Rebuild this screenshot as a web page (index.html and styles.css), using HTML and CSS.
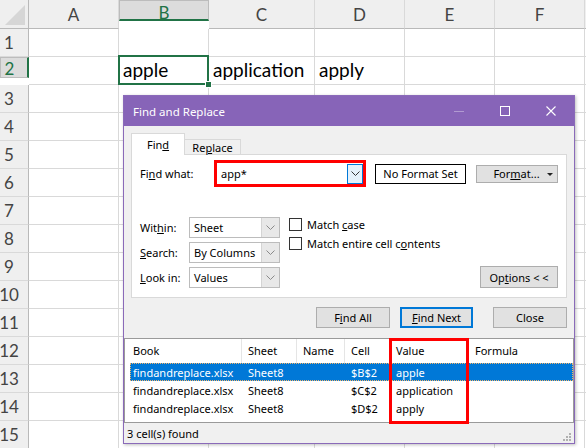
FILE: index.html
```html
<!DOCTYPE html>
<html>
<head>
<meta charset="utf-8">
<link rel="stylesheet" href="styles.css">
</head>
<body>
<div class="sheet">
  <div class="corner"><span class="tri"></span></div>
  <div class="colh">A</div><div class="colh sel">B</div><div class="colh">C</div><div class="colh">D</div><div class="colh">E</div><div class="colh">F</div><div class="colh"></div>

  <div class="rowh">1</div><div class="cell"></div><div class="cell"></div><div class="cell"></div><div class="cell"></div><div class="cell"></div><div class="cell"></div><div class="cell"></div>
  <div class="rowh sel">2</div><div class="cell"></div><div class="cell active"><span>apple</span><span class="cursor"></span><span class="handle"></span></div><div class="cell">application</div><div class="cell">apply</div><div class="cell"></div><div class="cell"></div><div class="cell"></div>
  <div class="rowh">3</div><div class="cell"></div><div class="cell"></div><div class="cell"></div><div class="cell"></div><div class="cell"></div><div class="cell"></div><div class="cell"></div>
  <div class="rowh">4</div><div class="cell"></div><div class="cell"></div><div class="cell"></div><div class="cell"></div><div class="cell"></div><div class="cell"></div><div class="cell"></div>
  <div class="rowh">5</div><div class="cell"></div><div class="cell"></div><div class="cell"></div><div class="cell"></div><div class="cell"></div><div class="cell"></div><div class="cell"></div>
  <div class="rowh">6</div><div class="cell"></div><div class="cell"></div><div class="cell"></div><div class="cell"></div><div class="cell"></div><div class="cell"></div><div class="cell"></div>
  <div class="rowh">7</div><div class="cell"></div><div class="cell"></div><div class="cell"></div><div class="cell"></div><div class="cell"></div><div class="cell"></div><div class="cell"></div>
  <div class="rowh">8</div><div class="cell"></div><div class="cell"></div><div class="cell"></div><div class="cell"></div><div class="cell"></div><div class="cell"></div><div class="cell"></div>
  <div class="rowh">9</div><div class="cell"></div><div class="cell"></div><div class="cell"></div><div class="cell"></div><div class="cell"></div><div class="cell"></div><div class="cell"></div>
  <div class="rowh">10</div><div class="cell"></div><div class="cell"></div><div class="cell"></div><div class="cell"></div><div class="cell"></div><div class="cell"></div><div class="cell"></div>
  <div class="rowh">11</div><div class="cell"></div><div class="cell"></div><div class="cell"></div><div class="cell"></div><div class="cell"></div><div class="cell"></div><div class="cell"></div>
  <div class="rowh">12</div><div class="cell"></div><div class="cell"></div><div class="cell"></div><div class="cell"></div><div class="cell"></div><div class="cell"></div><div class="cell"></div>
  <div class="rowh">13</div><div class="cell"></div><div class="cell"></div><div class="cell"></div><div class="cell"></div><div class="cell"></div><div class="cell"></div><div class="cell"></div>
  <div class="rowh">14</div><div class="cell"></div><div class="cell"></div><div class="cell"></div><div class="cell"></div><div class="cell"></div><div class="cell"></div><div class="cell"></div>
  <div class="rowh">15</div><div class="cell"></div><div class="cell"></div><div class="cell"></div><div class="cell"></div><div class="cell"></div><div class="cell"></div><div class="cell"></div>
</div>

<div class="dialog">
  <div class="titlebar">
    <span class="title">Find and Replace</span>
    <div class="winbtns">
      <span class="wb"><span class="min"></span></span>
      <span class="wb"><span class="max"></span></span>
      <span class="wb"><svg width="10" height="10" viewBox="0 0 10 10"><path d="M0.5 0.5 L9.5 9.5 M9.5 0.5 L0.5 9.5" stroke="#fff" stroke-width="1.1" fill="none"/></svg></span>
    </div>
  </div>

  <div class="top">
    <div class="tabs">
      <div class="tab active"><span>Fin<u>d</u></span></div>
      <div class="tab"><span>Re<u>p</u>lace</span></div>
    </div>
    <div class="panel">
      <div class="findrow">
        <span class="lbl-find">Fi<u>n</u>d what:</span>
        <div class="redbox">
          <span class="combo-text">app*</span>
          <span class="combo-btn"><svg width="9" height="5" viewBox="0 0 9 5"><polyline points="0.5,0.5 4.5,4.5 8.5,0.5" stroke="#333" fill="none"/></svg></span>
        </div>
        <div class="nofmt">No Format Set</div>
        <div class="fmtbtn"><span class="fmt-text">For<u>m</u>at...</span><span class="arrow"></span></div>
      </div>
      <div class="opts">
        <div class="fields">
          <span>Wit<u>h</u>in:</span>
          <div class="sel"><span class="sel-text">Sheet</span><span class="sel-btn"><svg width="9" height="5" viewBox="0 0 9 5"><polyline points="0.5,0.5 4.5,4.5 8.5,0.5" stroke="#8a8a8a" fill="none"/></svg></span></div>
          <span><u>S</u>earch:</span>
          <div class="sel"><span class="sel-text">By Columns</span><span class="sel-btn"><svg width="9" height="5" viewBox="0 0 9 5"><polyline points="0.5,0.5 4.5,4.5 8.5,0.5" stroke="#8a8a8a" fill="none"/></svg></span></div>
          <span><u>L</u>ook in:</span>
          <div class="sel"><span class="sel-text">Values</span><span class="sel-btn"><svg width="9" height="5" viewBox="0 0 9 5"><polyline points="0.5,0.5 4.5,4.5 8.5,0.5" stroke="#8a8a8a" fill="none"/></svg></span></div>
        </div>
        <div class="checks">
          <div class="chk"><span class="box"></span><span>Match <u>c</u>ase</span></div>
          <div class="chk"><span class="box"></span><span>Match entire cell c<u>o</u>ntents</span></div>
        </div>
        <div class="btn optbtn"><span>Op<u>t</u>ions &lt; &lt;</span></div>
      </div>
    </div>
  </div>

  <div class="actions">
    <div class="btn findall"><span>F<u>i</u>nd All</span></div>
    <div class="btn findnext"><span><u>F</u>ind Next</span></div>
    <div class="btn closebtn"><span>Close</span></div>
  </div>

  <div class="list">
    <div class="lrow lhead">
      <span class="c book">Book</span><span class="c">Sheet</span><span class="c">Name</span><span class="c">Cell</span><span class="c">Value</span><span class="c">Formula</span>
    </div>
    <div class="lrow item selected">
      <span class="c book">findandreplace.xlsx</span><span class="c">Sheet8</span><span class="c"></span><span class="c">$B$2</span><span class="c">apple</span><span class="c"></span>
    </div>
    <div class="lrow item">
      <span class="c book">findandreplace.xlsx</span><span class="c">Sheet8</span><span class="c"></span><span class="c">$C$2</span><span class="c">application</span><span class="c"></span>
    </div>
    <div class="lrow item">
      <span class="c book">findandreplace.xlsx</span><span class="c">Sheet8</span><span class="c"></span><span class="c">$D$2</span><span class="c">apply</span><span class="c"></span>
    </div>
  </div>

  <div class="status">
    <span>3 cell(s) found</span>
    <svg class="grip" width="8" height="8" viewBox="0 0 8 8">
      <rect x="6" y="0" width="2" height="2" fill="#b0b0b0"/>
      <rect x="3" y="3" width="2" height="2" fill="#b0b0b0"/>
      <rect x="6" y="3" width="2" height="2" fill="#b0b0b0"/>
      <rect x="0" y="6" width="2" height="2" fill="#b0b0b0"/>
      <rect x="3" y="6" width="2" height="2" fill="#b0b0b0"/>
      <rect x="6" y="6" width="2" height="2" fill="#b0b0b0"/>
    </svg>
  </div>

  <div class="valuebox"></div>
</div>
</body>
</html>
```

FILE: styles.css
```css
html, body {
  margin: 0;
  padding: 0;
  width: 586px;
  height: 448px;
  overflow: hidden;
  background: #fff;
}

.sheet {
  display: grid;
  grid-template-columns: 29px 90px 90px 106px 90px 90px 90px 1fr;
  grid-template-rows: 29px;
  grid-auto-rows: 28px;
  font-family: Lato, "Liberation Sans", sans-serif;
}

.corner, .colh, .rowh {
  background: #efefef;
  box-sizing: border-box;
  color: #444;
  font-size: 17px;
  display: flex;
  align-items: center;
  justify-content: center;
}

.corner {
  border-right: 1px solid #b9b9b9;
  border-bottom: 1px solid #b9b9b9;
  position: relative;
}
.tri {
  position: absolute;
  left: 5px;
  top: 5px;
  width: 20px;
  height: 20px;
  background: #d6d6d6;
  clip-path: polygon(100% 0, 100% 100%, 0 100%);
}

.colh {
  border-right: 1px solid #d9d9d9;
  border-bottom: 1px solid #b9b9b9;
  padding-top: 1px;
}
.colh.sel {
  background: #dcdcdc;
  color: #217346;
  border-bottom: 2px solid #217346;
}

.rowh {
  border-right: 1px solid #b9b9b9;
  border-bottom: 1px solid #d9d9d9;
  padding-right: 10px;
}
.rowh.sel {
  background: #dcdcdc;
  color: #217346;
  border-right: 2px solid #217346;
  padding-right: 9px;
}

.cell {
  box-sizing: border-box;
  border-right: 1px solid #d9d9d9;
  border-bottom: 1px solid #d9d9d9;
  font-size: 19px;
  line-height: 24px;
  padding: 0 0 2px 4px;
  display: flex;
  align-items: flex-end;
  white-space: nowrap;
  color: #000;
}
.cell.active {
  position: relative;
}
.cursor {
  position: absolute;
  left: -1px;
  top: -2px;
  right: -1px;
  bottom: -1px;
  border: 2px solid #217346;
}
.handle {
  position: absolute;
  right: -4px;
  bottom: -4px;
  width: 5px;
  height: 5px;
  background: #217346;
  border: 1px solid #fff;
}

/* Dialog */
.dialog {
  position: absolute;
  left: 123px;
  top: 95px;
  width: 452px;
  height: 349px;
  box-sizing: border-box;
  border: 1px solid #8a6ab9;
  background: #f0f0f0;
  font-family: "Noto Sans", "Open Sans", sans-serif;
  font-size: 11px;
  color: #000;
  display: flex;
  flex-direction: column;
  box-shadow: 1px 1px 3px rgba(0, 0, 0, 0.25);
}

.titlebar {
  height: 30px;
  flex: none;
  background: #8764b8;
  color: #fff;
  display: flex;
  align-items: center;
  padding-left: 9px;
  font-size: 11.5px;
}
.winbtns {
  margin-left: auto;
  display: flex;
  height: 100%;
}
.wb {
  width: 46px;
  height: 100%;
  display: flex;
  align-items: center;
  justify-content: center;
}
.min {
  width: 10px;
  height: 1px;
  background: rgba(255, 255, 255, 0.35);
}
.max {
  width: 8px;
  height: 8px;
  border: 1px solid #fff;
}

.top {
  padding: 7px 7px 0 7px;
}
.tabs {
  display: flex;
  align-items: flex-end;
  height: 22px;
  margin-bottom: -1px;
  position: relative;
  z-index: 1;
}
.tab {
  box-sizing: border-box;
  border: 1px solid #d9d9d9;
  border-bottom: none;
  display: flex;
  align-items: center;
  justify-content: center;
}
.tab.active {
  width: 54px;
  height: 22px;
  background: #fff;
  padding-bottom: 1px;
}
.tab:not(.active) {
  width: 57px;
  height: 15px;
  margin-left: -1px;
  margin-bottom: 1px;
  background: #f0f0f0;
}

.panel {
  box-sizing: border-box;
  height: 144px;
  border: 1px solid #d9d9d9;
  background: #fff;
  padding: 5px 8px 0 8px;
}

.findrow {
  display: flex;
  align-items: center;
  height: 27px;
}
.lbl-find {
  width: 74px;
}
.redbox {
  box-sizing: border-box;
  width: 152px;
  height: 27px;
  border: 3px solid #f00;
  display: flex;
  align-items: center;
  background: #fff;
}
.combo-text {
  flex: 1;
  padding-left: 4px;
}
.combo-btn {
  box-sizing: border-box;
  width: 16px;
  height: 20px;
  border: 1px solid #0078d7;
  background: #e5f1fb;
  display: flex;
  align-items: center;
  justify-content: center;
}
.nofmt {
  box-sizing: border-box;
  margin-left: 9px;
  width: 91px;
  height: 20px;
  border: 1px solid #000;
  background: #fff;
  display: flex;
  align-items: center;
  justify-content: center;
}
.fmtbtn {
  box-sizing: border-box;
  margin-left: 10px;
  width: 82px;
  height: 18px;
  background: #e1e1e1;
  border: 1px solid #adadad;
  display: flex;
  align-items: center;
  padding: 0 4px 0 9px;
}
.fmt-text {
  flex: 1;
  text-align: center;
}
.arrow {
  width: 0;
  height: 0;
  border-left: 3px solid transparent;
  border-right: 3px solid transparent;
  border-top: 3px solid #222;
  margin-top: 1px;
}

.opts {
  margin-top: 30px;
  display: flex;
  align-items: flex-start;
  height: 71px;
}
.fields {
  display: grid;
  grid-template-columns: 49px 91px;
  grid-auto-rows: 21px;
  row-gap: 4px;
  align-items: center;
}
.sel {
  box-sizing: border-box;
  height: 21px;
  border: 1px solid #bcbcbc;
  background: #fff;
  display: flex;
  align-items: stretch;
}
.sel-text {
  flex: 1;
  padding-left: 4px;
  display: flex;
  align-items: center;
}
.sel-btn {
  width: 17px;
  background: #e8e8e8;
  border-left: 1px solid #d4d4d4;
  display: flex;
  align-items: center;
  justify-content: center;
}

.checks {
  margin-left: 9px;
  padding-top: 1px;
  display: flex;
  flex-direction: column;
  gap: 6px;
}
.chk {
  display: flex;
  align-items: center;
  height: 13px;
}
.box {
  box-sizing: border-box;
  width: 13px;
  height: 13px;
  border: 1px solid #333;
  background: #fff;
  margin-right: 5px;
}

.btn {
  box-sizing: border-box;
  background: #e1e1e1;
  border: 1px solid #adadad;
  display: flex;
  align-items: center;
  justify-content: center;
}
.optbtn {
  margin-left: auto;
  align-self: flex-end;
  width: 78px;
  height: 22px;
}

.actions {
  display: flex;
  justify-content: flex-end;
  padding-right: 7px;
  margin-top: 9px;
  height: 21px;
}
.actions .btn {
  height: 21px;
}
.findall {
  width: 74px;
  margin-right: 10px;
}
.findnext {
  width: 73px;
  margin-right: 20px;
  border: 2px solid #0078d7;
}
.closebtn {
  width: 74px;
}

.list {
  margin-top: 10px;
  box-sizing: border-box;
  height: 85px;
  border: 1px solid #9a9a9a;
  background: #fff;
  padding-left: 5px;
}
.lrow {
  display: grid;
  grid-template-columns: 111px 55px 48px 45px 79px 1fr;
  align-items: center;
  white-space: nowrap;
}
.lhead {
  height: 24px;
  align-items: stretch;
}
.lhead .c {
  display: flex;
  align-items: center;
  padding-bottom: 1px;
}
.lhead .c + .c {
  border-left: 1px solid #e5e5e5;
  padding-left: 6px;
}
.c {
  padding-left: 7px;
  overflow: hidden;
}
.c.book {
  padding-left: 3px;
}
.item {
  height: 18px;
  box-sizing: border-box;
}
.item.selected {
  background: #0078d7;
  color: #fff;
  outline: 1px dotted #f3b46a;
  outline-offset: -1px;
}

.status {
  flex: 1;
  display: flex;
  align-items: center;
  padding-left: 3px;
  padding-right: 3px;
}
.grip {
  margin-left: auto;
  align-self: flex-end;
  margin-bottom: 2px;
}

.valuebox {
  position: absolute;
  left: 265px;
  top: 242px;
  width: 80px;
  height: 86px;
  box-sizing: border-box;
  border: 3px solid #f00;
}
```
